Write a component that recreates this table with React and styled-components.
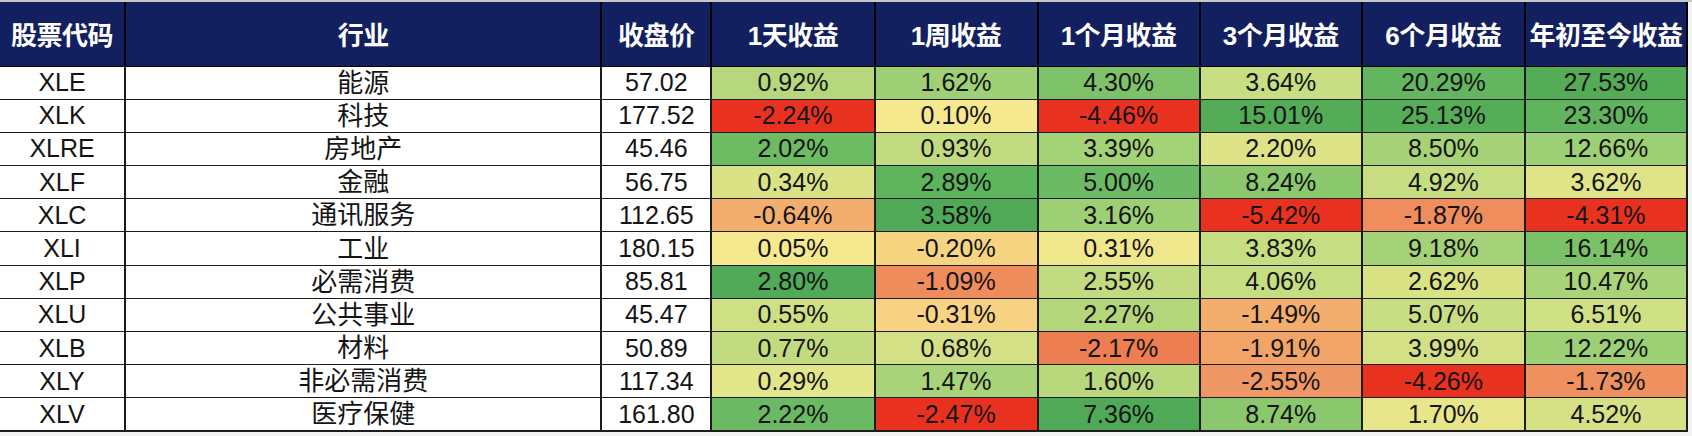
import React from "react";
import styled, { createGlobalStyle } from "styled-components";

const GlobalStyle = createGlobalStyle`
  html, body {
    margin: 0;
    padding: 0;
    background: #f2f2f2;
  }
  body {
    font-family: "Liberation Sans", Arial, "Noto Sans CJK SC", sans-serif;
  }
`;

const Page = styled.div`
  border-top: 2px solid #c8c8c8;
  width: 1692px;
`;

const Table = styled.table`
  border-collapse: collapse;
  table-layout: fixed;
  width: 1688px;
  background: #ffffff;
  color: #141414;
`;

const HeadRow = styled.tr`
  height: 64px;
  background: #13205f;
`;

const Row = styled.tr`
  height: 33.2px;
`;

const HeadCell = styled.th`
  padding: 0;
  color: #ffffff;
  font-family: "Liberation Sans", "Noto Sans CJK SC", sans-serif;
  font-weight: 700;
  font-size: 26px;
  letter-spacing: -0.5px;
  text-align: center;
  vertical-align: middle;
  white-space: nowrap;
  border-left: 2px solid #000000;
  border-right: 2px solid #000000;
  border-bottom: 1px solid #000000;
  &:first-child {
    border-left: none;
  }
`;

const Cell = styled.td`
  padding: 0;
  background: ${(p) => p.$bg || "#ffffff"};
  font-family: "Liberation Sans", "Noto Sans CJK SC", sans-serif;
  font-size: ${(p) => (p.$cjk ? "26px" : "25px")};
  line-height: 1;
  text-align: center;
  vertical-align: middle;
  white-space: nowrap;
  border-top: 1px solid #1c1c1c;
  border-bottom: 1px solid #1c1c1c;
  border-left: 2px solid #1c1c1c;
  border-right: 2px solid #1c1c1c;
  &:first-child {
    border-left: none;
  }
`;

const LastRow = styled(Row)`
  & > td {
    border-bottom: 2px solid #1c1c1c;
  }
`;

const widths = [125, 476, 110, 163, 163, 162, 162, 163, 162];

const headers = [
  "股票代码",
  "行业",
  "收盘价",
  "1天收益",
  "1周收益",
  "1个月收益",
  "3个月收益",
  "6个月收益",
  "年初至今收益",
];

const rows = [
  {
    code: "XLE", name: "能源", price: "57.02",
    vals: ["0.92%", "1.62%", "4.30%", "3.64%", "20.29%", "27.53%"],
    bg: ["#b6d77b", "#9fd075", "#7dc269", "#c8de82", "#63b65f", "#54ac57"],
  },
  {
    code: "XLK", name: "科技", price: "177.52",
    vals: ["-2.24%", "0.10%", "-4.46%", "15.01%", "25.13%", "23.30%"],
    bg: ["#e8321f", "#f6e88e", "#e8321f", "#53ab56", "#56ad57", "#5fb45d"],
  },
  {
    code: "XLRE", name: "房地产", price: "45.46",
    vals: ["2.02%", "0.93%", "3.39%", "2.20%", "8.50%", "12.66%"],
    bg: ["#6dbc64", "#c3db80", "#a4d277", "#dde386", "#a7d277", "#9dcf74"],
  },
  {
    code: "XLF", name: "金融", price: "56.75",
    vals: ["0.34%", "2.89%", "5.00%", "8.24%", "4.92%", "3.62%"],
    bg: ["#dbe286", "#5db45d", "#6cbb64", "#8cc86e", "#c6dd81", "#e0e488"],
  },
  {
    code: "XLC", name: "通讯服务", price: "112.65",
    vals: ["-0.64%", "3.58%", "3.16%", "-5.42%", "-1.87%", "-4.31%"],
    bg: ["#f3ae6d", "#4fa957", "#9dcf74", "#e8321f", "#ef8d5d", "#e8321f"],
  },
  {
    code: "XLI", name: "工业", price: "180.15",
    vals: ["0.05%", "-0.20%", "0.31%", "3.83%", "9.18%", "16.14%"],
    bg: ["#f6e88e", "#f7d482", "#f0e68b", "#c6dd81", "#a6d277", "#7bc168"],
  },
  {
    code: "XLP", name: "必需消费", price: "85.81",
    vals: ["2.80%", "-1.09%", "2.55%", "4.06%", "2.62%", "10.47%"],
    bg: ["#50aa57", "#ef8c5b", "#c2db80", "#c6dd81", "#dae286", "#a8d378"],
  },
  {
    code: "XLU", name: "公共事业", price: "45.47",
    vals: ["0.55%", "-0.31%", "2.27%", "-1.49%", "5.07%", "6.51%"],
    bg: ["#cfe084", "#f8d383", "#b4d67a", "#f3ae6d", "#c9de82", "#d0e084"],
  },
  {
    code: "XLB", name: "材料", price: "50.89",
    vals: ["0.77%", "0.68%", "-2.17%", "-1.91%", "3.99%", "12.22%"],
    bg: ["#c2db80", "#d3e085", "#ed7e51", "#f2a468", "#d3e085", "#9dcf74"],
  },
  {
    code: "XLY", name: "非必需消费", price: "117.34",
    vals: ["0.29%", "1.47%", "1.60%", "-2.55%", "-4.26%", "-1.73%"],
    bg: ["#e2e589", "#a9d378", "#b9d87c", "#f09865", "#e8321f", "#ef915f"],
  },
  {
    code: "XLV", name: "医疗保健", price: "161.80",
    vals: ["2.22%", "-2.47%", "7.36%", "8.74%", "1.70%", "4.52%"],
    bg: ["#6bba63", "#e8321f", "#4fa957", "#8bc76d", "#e8e68a", "#d6e186"],
  },
];

function DataRow({ row, last }) {
  const R = last ? LastRow : Row;
  return (
    <R>
      <Cell>{row.code}</Cell>
      <Cell $cjk>{row.name}</Cell>
      <Cell>{row.price}</Cell>
      {row.vals.map((v, i) => (
        <Cell key={i} $bg={row.bg[i]}>
          {v}
        </Cell>
      ))}
    </R>
  );
}

export default function App() {
  return (
    <>
      <GlobalStyle />
      <Page>
        <Table>
          <colgroup>
            {widths.map((w, i) => (
              <col key={i} style={{ width: w }} />
            ))}
          </colgroup>
          <thead>
            <HeadRow>
              {headers.map((h) => (
                <HeadCell key={h}>{h}</HeadCell>
              ))}
            </HeadRow>
          </thead>
          <tbody>
            {rows.map((r, i) => (
              <DataRow key={r.code} row={r} last={i === rows.length - 1} />
            ))}
          </tbody>
        </Table>
      </Page>
    </>
  );
}
